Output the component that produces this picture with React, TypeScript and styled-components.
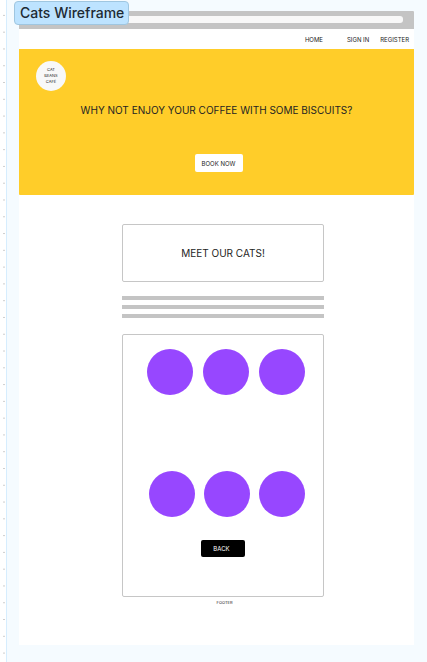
import React from "react";
import styled, { createGlobalStyle } from "styled-components";

const GlobalStyle = createGlobalStyle`
  *, *::before, *::after { box-sizing: border-box; }
  body {
    margin: 0;
    background: #ffffff;
    color: #242424;
    font-family: Inter, "Liberation Sans", sans-serif;
  }
  h1, h2, p { margin: 0; font-weight: 400; }
  button { font-family: inherit; padding: 0; border: 0; cursor: pointer; }
`;

const Canvas = styled.div`
  display: flex;
  min-height: 100vh;
`;

const DotRail = styled.div`
  flex: 0 0 6px;
  margin-top: 7px;
  background-image: radial-gradient(circle at 4px 50%, #c8c8c8 0, #d4d4d4 1px, transparent 1px);
  background-size: 6px 17px;
  background-repeat: no-repeat round;
`;

const Board = styled.section`
  position: relative;
  flex: 1;
  min-width: 0;
  padding: 11px 13px 17px 12px;
  border-left: 1px solid #d6edfe;
  background: #f5fbff;
`;

const BoardLabel = styled.h1`
  position: absolute;
  top: 1px;
  left: 7px;
  padding: 0 4px 0 5px;
  border: 1px solid #9fc6e0;
  border-radius: 4px;
  background: #bde3ff;
  color: #1e2a33;
  font-size: 14px;
  line-height: 22px;
  font-weight: 500;
  white-space: nowrap;
`;

const Page = styled.div`
  display: flex;
  flex-direction: column;
  background: #ffffff;
`;

const BrowserBar = styled.div`
  padding: 5px 11px 6px;
  border-radius: 1px 1px 0 0;
  background: #c4c4c4;
`;

const AddressField = styled.div`
  height: 7px;
  border-radius: 3px;
  background: #f8f8f8;
`;

const Nav = styled.nav`
  display: flex;
  justify-content: flex-end;
  align-items: center;
  height: 20px;
  padding: 2px 5px 0 0;
`;

const NavLink = styled.a<{ $gap?: number }>`
  margin-right: ${({ $gap = 0 }) => $gap}px;
  color: #242424;
  font-size: 6px;
  line-height: 8px;
  text-decoration: none;
`;

const Hero = styled.header`
  display: flex;
  flex-direction: column;
  align-items: center;
  height: 146px;
  padding: 12px 17px 0;
  border-radius: 0 0 1px 1px;
  background: #ffcd29;
`;

const Logo = styled.div`
  display: flex;
  align-items: center;
  justify-content: center;
  align-self: flex-start;
  width: 30px;
  height: 30px;
  border-radius: 50%;
  background: #f8f8f8;
  font-size: 4px;
  line-height: 6px;
  text-align: center;
`;

const HeroTitle = styled.h2`
  margin-top: 12px;
  font-size: 10px;
  line-height: 14px;
  white-space: nowrap;
`;

const BookButton = styled.button`
  width: 48px;
  height: 18px;
  margin: 37px 0 0 4px;
  border-radius: 2px;
  background: #ffffff;
  color: #242424;
  font-size: 6px;
`;

const Content = styled.main`
  align-self: center;
  display: flex;
  flex-direction: column;
  width: 51%;
  margin-left: 13px;
  padding: 29px 0 39px;
`;

const Panel = styled.section`
  border: 1px solid #c6c6c6;
  border-radius: 2px;
`;

const TitlePanel = styled(Panel)`
  display: flex;
  align-items: center;
  justify-content: center;
  height: 58px;
`;

const PanelTitle = styled.h2`
  font-size: 10px;
  line-height: 14px;
`;

const TextLines = styled.div`
  display: flex;
  flex-direction: column;
  gap: 5px;
  margin: 14px 0 16px;
`;

const TextLine = styled.div`
  height: 4px;
  background: #c4c4c4;
`;

const CatsPanel = styled(Panel)`
  display: flex;
  flex-direction: column;
  padding: 14px 18px 39px 24px;
`;

const CatRow = styled.div<{ $inset?: boolean }>`
  display: flex;
  justify-content: space-between;
  padding-left: ${({ $inset }) => ($inset ? 2 : 0)}px;
  margin-bottom: ${({ $inset }) => ($inset ? 23 : 76)}px;
`;

const Cat = styled.div`
  width: 46px;
  height: 46px;
  border-radius: 50%;
  background: #9747ff;
`;

const BackButton = styled.button`
  align-self: center;
  width: 44px;
  height: 17px;
  margin-right: 6px;
  padding-right: 3px;
  border-radius: 2px;
  background: #000000;
  color: #ffffff;
  font-size: 6px;
`;

const Footer = styled.footer`
  margin-top: 3px;
  padding-left: 3px;
  font-size: 4px;
  line-height: 6px;
  text-align: center;
`;

export default function App() {
  return (
    <>
      <GlobalStyle />
      <Canvas>
        <DotRail />
        <Board>
          <Page>
            <BrowserBar>
              <AddressField />
            </BrowserBar>
            <Nav>
              <NavLink href="#home" $gap={24}>HOME</NavLink>
              <NavLink href="#sign-in" $gap={11}>SIGN IN</NavLink>
              <NavLink href="#register">REGISTER</NavLink>
            </Nav>
            <Hero>
              <Logo>
                CAT
                <br />
                BEANS
                <br />
                CAFÉ
              </Logo>
              <HeroTitle>WHY NOT ENJOY YOUR COFFEE WITH SOME BISCUITS?</HeroTitle>
              <BookButton type="button">BOOK NOW</BookButton>
            </Hero>
            <Content>
              <TitlePanel>
                <PanelTitle>MEET OUR CATS!</PanelTitle>
              </TitlePanel>
              <TextLines>
                <TextLine />
                <TextLine />
                <TextLine />
              </TextLines>
              <CatsPanel>
                <CatRow>
                  <Cat />
                  <Cat />
                  <Cat />
                </CatRow>
                <CatRow $inset>
                  <Cat />
                  <Cat />
                  <Cat />
                </CatRow>
                <BackButton type="button">BACK</BackButton>
              </CatsPanel>
              <Footer>FOOTER</Footer>
            </Content>
          </Page>
          <BoardLabel>Cats Wireframe</BoardLabel>
        </Board>
      </Canvas>
    </>
  );
}
